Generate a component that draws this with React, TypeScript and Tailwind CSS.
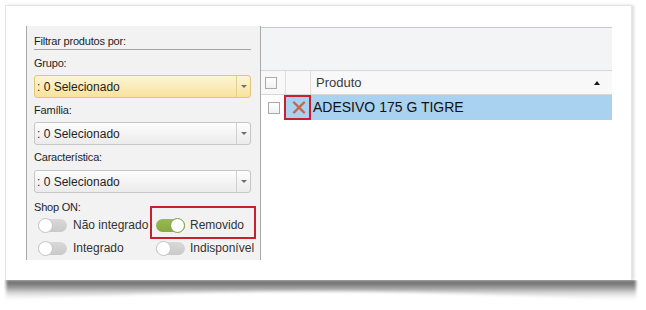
const label = "font-['Liberation_Sans',Arial,sans-serif] text-[11px] leading-[14px] tracking-[-0.2px] text-[#1e1e1e]";
const body = "font-['Liberation_Sans',Arial,sans-serif]";

const Combo = ({ active }: { active?: boolean }) => (
  <div
    className={
      "flex h-[23px] items-stretch rounded-[3px] border " +
      (active
        ? "border-[#e0c677] bg-gradient-to-b from-[#fdf5d6] to-[#f8e29c]"
        : "border-[#c6c6c6] bg-gradient-to-b from-[#fdfdfd] to-[#ebebeb]")
    }
  >
    <div className={body + " flex flex-1 items-center pl-[2px] text-[12px] text-[#1e1e1e]"}>: 0 Selecionado</div>
    <div
      className={
        "flex w-[14px] items-center justify-center border-l " +
        (active ? "border-[#e6d08f]" : "border-[#d0d0d0]")
      }
    >
      <div className="h-0 w-0 border-x-[3px] border-t-[3px] border-x-transparent border-t-[#6e6e6e]" />
    </div>
  </div>
);

const Toggle = ({ on }: { on?: boolean }) => (
  <div
    className={
      "relative h-[13px] w-[29px] rounded-full " +
      (on ? "bg-gradient-to-b from-[#97bb52] to-[#86a942]" : "bg-gradient-to-b from-[#d9d9d9] to-[#c9c9c9]")
    }
  >
    <div
      className={
        "absolute top-[-1px] h-[15px] w-[15px] rounded-full border bg-white " +
        (on ? "right-0 border-[#7d9c3c]" : "left-0 border-[#c4c4c4]")
      }
    />
  </div>
);

const Check = () => (
  <div className="h-[12px] w-[12px] border border-[#a9a9a9] bg-gradient-to-b from-white to-[#f1f1f1]" />
);

export default function App() {
  return (
    <div className="h-[310px] w-[646px] bg-white pl-[5px] pt-[5px]">
      <div className="relative flex h-[276px] w-[627px] border border-[#e4e4e4] bg-white pl-[20px] pt-[20px] shadow-[2px_0_3px_rgba(0,0,0,0.14)]">
        {/* left filter panel */}
        <div className="relative h-[234px] w-[235px] border-x border-[#a9a9a9] bg-[#f2f2f2] pl-[7px] pr-[9px]">
          <div className="h-[24px] border-b border-[#a3a3a3] pt-[8px]">
            <div className={label}>Filtrar produtos por:</div>
          </div>
          <div className={label + " mt-[6px]"}>Grupo:</div>
          <div className="mt-[5px]">
            <Combo active />
          </div>
          <div className={label + " mt-[5px]"}>Família:</div>
          <div className="mt-[5px]">
            <Combo />
          </div>
          <div className={label + " mt-[5px]"}>Característica:</div>
          <div className="mt-[6px]">
            <Combo />
          </div>
          <div className={label + " mt-[7px]"}>Shop ON:</div>
          <div className={body + " mt-[2px] grid grid-cols-[118px_1fr] gap-y-[5px] pl-[4px] text-[12px] text-[#333]"}>
            <div className="flex h-[18px] items-center gap-[6px]">
              <Toggle />
              <span>Não integrado</span>
            </div>
            <div className="flex h-[18px] items-center gap-[5px]">
              <Toggle on />
              <span>Removido</span>
            </div>
            <div className="flex h-[18px] items-center gap-[6px]">
              <Toggle />
              <span>Integrado</span>
            </div>
            <div className="flex h-[18px] items-center gap-[5px]">
              <Toggle />
              <span>Indisponível</span>
            </div>
          </div>
          <div className="absolute left-[123px] top-[180px] h-[33px] w-[106px] border-2 border-[#c8202e]" />
        </div>

        {/* product grid */}
        <div className="relative mt-[1px] w-[351px]">
          <div className="h-[43px] border-t border-[#c8c8c8] bg-[#f3f4f6]" />
          <div className="flex h-[25px] border-y border-[#d8d8d8] bg-[#f8f8f9]">
            <div className="flex w-[25px] items-center border-r border-[#dedede] pl-[4px]">
              <Check />
            </div>
            <div className="w-[25px] border-r border-[#dedede]" />
            <div className={body + " flex flex-1 items-center justify-between pl-[5px] pr-[12px] text-[13px] text-[#3a3a3a]"}>
              <span>Produto</span>
              <div className="h-0 w-0 border-x-[3px] border-b-[4px] border-x-transparent border-b-[#1a1a1a]" />
            </div>
          </div>
          <div className="flex h-[25px]">
            <div className="flex w-[25px] items-center border-r border-[#e2e2e2] bg-white pl-[7px]">
              <Check />
            </div>
            <div className="flex w-[25px] items-center justify-center bg-[#a9d1f0]">
              <svg width="14" height="13" viewBox="0 0 14 13">
                <path d="M2 1.5 L12 11.5 M12 1.5 L2 11.5" stroke="#c4684a" strokeWidth="2.4" strokeLinecap="round" />
              </svg>
            </div>
            <div className={body + " flex flex-1 items-center bg-[#a9d1f0] pl-[2px] text-[14px] text-[#111]"}>
              ADESIVO 175 G TIGRE
            </div>
          </div>
          <div className="absolute left-[23px] top-[68px] h-[25px] w-[27px] border-2 border-[#c8202e]" />
        </div>

        {/* curled paper shadow */}
        <svg className="absolute left-[-2px] top-full" width="634" height="26" viewBox="0 0 634 26">
          <defs>
            <linearGradient id="sh" x1="0" y1="0" x2="0" y2="1">
              <stop offset="0" stopColor="#5e5e5e" />
              <stop offset="0.35" stopColor="#9a9a9a" />
              <stop offset="1" stopColor="#ffffff" stopOpacity="0" />
            </linearGradient>
            <filter id="bl">
              <feGaussianBlur stdDeviation="1.4" />
            </filter>
          </defs>
          <path d="M2 0 H632 V22 Q330 2 2 20 Z" fill="url(#sh)" filter="url(#bl)" />
        </svg>
      </div>
    </div>
  );
}
